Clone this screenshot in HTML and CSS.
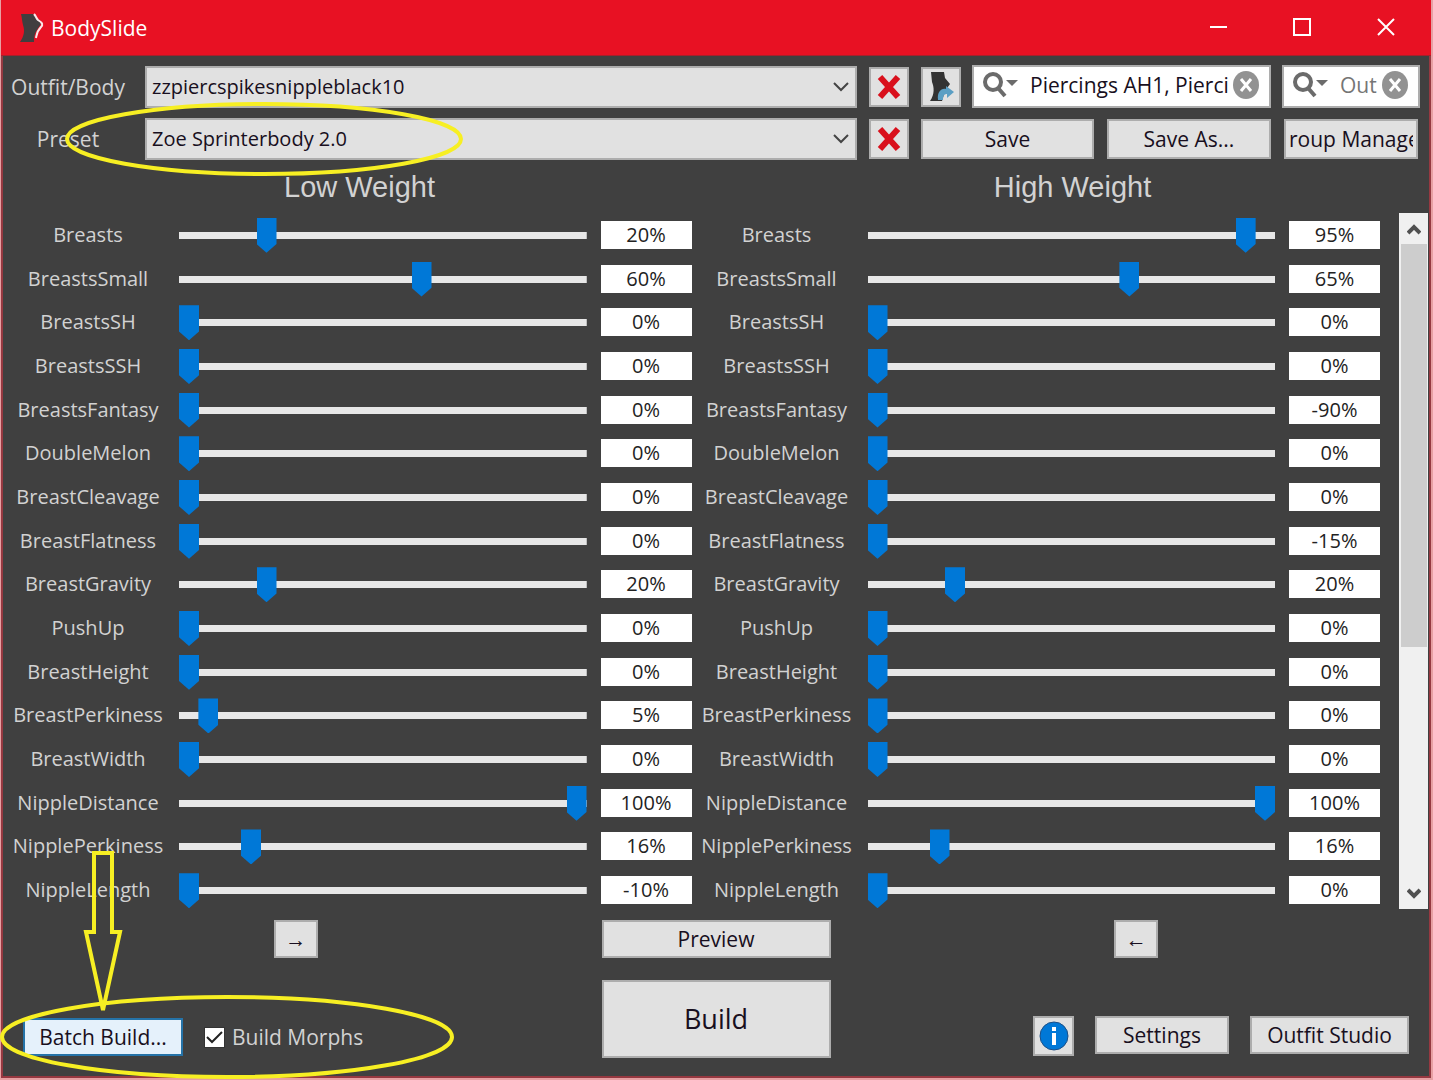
FILE: index.html
```html
<!DOCTYPE html>
<html lang="en">
<head>
<meta charset="utf-8">
<title>BodySlide</title>
<link rel="stylesheet" href="styles.css">
</head>
<body>
<div class="window">
  <header class="titlebar">
    <svg class="app-icon" width="26" height="30" viewBox="0 0 26 30" aria-hidden="true"><path d="M2 1H14L18 5C22 8 23 10 20 14C17 18 15 21 15 29H1C5 23 6 18 4 12C3 8 3 5 2 1Z" fill="#403e3f"/><path d="M15 1C17 3 17 5 19 7C24 10 24 12 22 14C18 18 18 20 17 25" fill="none" stroke="#fbe9ea" stroke-width="2"/></svg>
    <h1 class="app-name">BodySlide</h1>
    <div class="window-buttons">
      <button class="window-button" aria-label="Minimize"><svg width="20" height="20" viewBox="0 0 20 20"><path d="M1 9H18" stroke="#fff" stroke-width="2"/></svg></button>
      <button class="window-button" aria-label="Maximize"><svg width="20" height="20" viewBox="0 0 20 20"><path d="M1 1H17V17H1Z" fill="none" stroke="#fff" stroke-width="2"/></svg></button>
      <button class="window-button" aria-label="Close"><svg width="20" height="20" viewBox="0 0 20 20"><path d="M1 1L17 17M17 1L1 17" stroke="#fff" stroke-width="2"/></svg></button>
    </div>
  </header>

  <main>
    <div class="toolbar">
      <div class="tool-row">
        <label class="tool-label" for="outfit">Outfit/Body</label>
        <select class="combo" id="outfit"><option>zzpiercspikesnippleblack10</option></select>
        <button class="button icon-button" aria-label="Clear outfit"><svg width="26" height="26" viewBox="0 0 26 26"><path d="M4 3L22 23M22 3L4 23" stroke="#d9101c" stroke-width="6"/></svg></button>
        <div class="tool-group">
          <button class="button icon-button" aria-label="Choose body"><svg width="26" height="32" viewBox="0 0 26 32"><path d="M3 1H16L17 7L22 13L17 20L14 30H2C7 23 6 16 4 11Z" fill="#333"/><path d="M10 29C9 21 13 17 18 18V15L26 21L19 27V23C16 23 15 25 15 29Z" fill="#5b9fc4"/></svg></button>
          <div class="search search-wide">
            <svg width="38" height="28" viewBox="0 0 38 28" aria-hidden="true"><circle cx="12" cy="11" r="8" fill="none" stroke="#6b6b6b" stroke-width="4"/><path d="M17 17L24 25" stroke="#6b6b6b" stroke-width="4"/><path d="M25 9H37L31 15Z" fill="#6b6b6b"/></svg>
            <input class="search-input" type="text" aria-label="Group filter" value="Piercings AH1, Pierci">
            <button class="clear" aria-label="Clear group filter"><svg width="26" height="28" viewBox="0 0 26 28"><ellipse cx="13" cy="14" rx="13" ry="14" fill="#929292"/><path d="M8 8L18 20M18 8L8 20" stroke="#fff" stroke-width="3"/></svg></button>
          </div>
          <div class="search search-narrow">
            <svg width="38" height="28" viewBox="0 0 38 28" aria-hidden="true"><circle cx="12" cy="11" r="8" fill="none" stroke="#6b6b6b" stroke-width="4"/><path d="M17 17L24 25" stroke="#6b6b6b" stroke-width="4"/><path d="M25 9H37L31 15Z" fill="#6b6b6b"/></svg>
            <input class="search-input" type="text" aria-label="Outfit filter" placeholder="Out">
            <button class="clear" aria-label="Clear outfit filter"><svg width="26" height="28" viewBox="0 0 26 28"><ellipse cx="13" cy="14" rx="13" ry="14" fill="#929292"/><path d="M8 8L18 20M18 8L8 20" stroke="#fff" stroke-width="3"/></svg></button>
          </div>
        </div>
      </div>
      <div class="tool-row">
        <label class="tool-label" for="preset">Preset</label>
        <select class="combo" id="preset"><option>Zoe Sprinterbody 2.0</option></select>
        <button class="button icon-button" aria-label="Delete preset"><svg width="26" height="26" viewBox="0 0 26 26"><path d="M4 3L22 23M22 3L4 23" stroke="#d9101c" stroke-width="6"/></svg></button>
        <div class="tool-group preset-buttons">
          <button class="button save">Save</button>
          <button class="button save-as">Save As...</button>
          <button class="button manager"><span class="clipped"><span>Group Manager</span></span></button>
        </div>
      </div>
    </div>

    <div class="headings">
      <h2 class="heading">Low Weight</h2>
      <h2 class="heading">High Weight</h2>
    </div>

    <div class="panel">
      <div class="sliders" id="low"></div>
      <div class="sliders" id="high"></div>
      <div class="scrollbar">
        <button class="scroll-button" aria-label="Scroll up"><svg width="14" height="12" viewBox="0 0 14 12"><path d="M1 10L7 4L13 10" fill="none" stroke="#505050" stroke-width="4"/></svg></button>
        <div class="scroll-track"><div class="scroll-thumb"></div></div>
        <button class="scroll-button" aria-label="Scroll down"><svg width="14" height="12" viewBox="0 0 14 12"><path d="M1 2L7 8L13 2" fill="none" stroke="#505050" stroke-width="4"/></svg></button>
      </div>
    </div>

    <footer class="actions">
      <div class="side side-left">
        <button class="button arrow" aria-label="Copy low to high">→</button>
        <div class="batch-row">
          <button class="button batch">Batch Build...</button>
          <input class="tick" type="checkbox" id="morphs" checked>
          <label for="morphs">Build Morphs</label>
        </div>
      </div>
      <div class="center">
        <button class="button">Preview</button>
        <button class="button build">Build</button>
      </div>
      <div class="side side-right">
        <button class="button arrow" aria-label="Copy high to low">←</button>
        <div class="settings-row">
          <button class="button info" aria-label="About"><svg width="30" height="30" viewBox="0 0 30 30"><circle cx="15" cy="15" r="14" fill="#0078d7" stroke="#1d4f86" stroke-width="1"/><path d="M13 6H17V10H13ZM13 12H17V24H13Z" fill="#fff"/></svg></button>
          <button class="button settings">Settings</button>
          <button class="button studio">Outfit Studio</button>
        </div>
      </div>
    </footer>
  </main>

  <svg class="mark mark-preset" width="402" height="78" viewBox="0 0 402 78" aria-hidden="true"><ellipse cx="201" cy="39" rx="197" ry="35"/></svg>
  <svg class="mark mark-batch" width="456" height="230" viewBox="0 0 456 230" aria-hidden="true"><ellipse cx="227" cy="188" rx="225" ry="40"/><path d="M94 4H112V83H120L103 161L86 83H94Z"/></svg>
</div>
<script src="sliders.js"></script>
</body>
</html>
```
FILE: styles.css
```css
* { box-sizing: border-box; }

body {
  margin: 0;
  padding: 0 2px 2px 1px;
  background: #e7a0a3;
  color: #d2d2d2;
  font-family: "Open Sans", "Noto Sans", sans-serif;
  font-size: 21px;
  line-height: 28px;
}

button, input, select { font: inherit; margin: 0; padding: 0; border-radius: 0; }
svg { display: block; flex: none; }

.window {
  position: relative;
  background: #404040;
  border: 2px solid #963941;
  border-top: 0;
}

.titlebar {
  display: flex;
  align-items: center;
  height: 56px;
  margin: 0 -2px;
  padding: 0 2px 0 18px;
  background: #e81123;
  border-bottom: 1px solid #a5202b;
}
.app-name { flex: 1; margin: 0 0 0 6px; color: #fff; font-size: 21px; font-weight: 400; }
.window-buttons { display: flex; }
.window-button {
  display: flex;
  align-items: center;
  justify-content: center;
  width: 84px;
  height: 52px;
  background: none;
  border: 0;
}

.toolbar { display: grid; gap: 10px; padding: 9px 9px 0 0; }
.tool-row {
  display: grid;
  grid-template-columns: 130px minmax(0, 1fr) 40px 499px;
  column-gap: 12px;
  align-items: center;
}
.tool-label { text-align: center; }
.combo {
  width: 100%;
  height: 42px;
  padding: 0 40px 0 5px;
  appearance: none;
  color: #180f20;
  font-size: 20px;
  border: 2px solid #adadad;
  background: #e1e1e1 url("data:image/svg+xml,%3Csvg xmlns='http://www.w3.org/2000/svg' width='16' height='10'%3E%3Cpath d='M1 1L8 8L15 1' fill='none' stroke='%23444' stroke-width='2'/%3E%3C/svg%3E") no-repeat right 6px center;
}
.tool-group { display: flex; gap: 11px; align-items: center; }
.preset-buttons { gap: 13px; padding-right: 2px; }
.button {
  display: flex;
  align-items: center;
  justify-content: center;
  height: 40px;
  color: #180f20;
  background: #e1e1e1;
  border: 2px solid #adadad;
  white-space: nowrap;
}
.icon-button { width: 40px; flex: none; }
.save { width: 173px; }
.save-as { width: 164px; }
.manager { flex: 1; min-width: 0; padding: 0 3px; }
.clipped { display: flex; justify-content: center; width: 100%; overflow: hidden; }

.search {
  display: flex;
  align-items: center;
  height: 43px;
  padding: 0 10px 4px 7px;
  background: #fff;
  border: 2px solid #adadad;
}
.search-wide { width: 299px; }
.search-narrow { flex: 1; min-width: 0; }
.search-input {
  flex: 1;
  min-width: 0;
  height: 36px;
  margin-left: 11px;
  color: #180f20;
  background: none;
  border: 0;
}
.search-input::placeholder { color: #757575; opacity: 1; }
.clear { flex: none; margin-left: 4px; background: none; border: 0; }

.headings { display: grid; grid-template-columns: 1fr 1fr; padding-top: 7px; }
.heading {
  margin: 0;
  text-align: center;
  font: 400 29px/40px "Liberation Sans", Arial, sans-serif;
}

.panel {
  display: grid;
  grid-template-columns: minmax(0, 1fr) minmax(0, 1fr) 48px;
  margin-top: 6px;
  padding-right: 1px;
}
.sliders { display: grid; grid-template-rows: repeat(16, 1fr); height: 699px; }
.slider-row {
  display: grid;
  grid-template-columns: 170px minmax(0, 1fr) 91px;
  align-items: center;
}
.slider-label { text-align: center; font-size: 20px; }
.range {
  appearance: none;
  height: 36px;
  margin: 1px 14px 0 6px;
  background: linear-gradient(#e7e7e7, #e7e7e7) no-repeat center / 100% 7px;
}
.range::-webkit-slider-thumb {
  appearance: none;
  width: 20px;
  height: 35px;
  background: #0078d7;
  clip-path: polygon(0 0, 100% 0, 100% 75%, 50% 100%, 0 75%);
}
.value {
  width: 100%;
  height: 28px;
  text-align: center;
  font-size: 20px;
  color: #222;
  background: #fff;
  border: 0;
}

.scrollbar {
  display: flex;
  flex-direction: column;
  height: 696px;
  margin-left: 19px;
  background: #f0f0f0;
}
.scroll-button {
  display: flex;
  align-items: center;
  justify-content: center;
  height: 31px;
  background: none;
  border: 0;
}
.scroll-track { flex: 1; padding: 0 1px 0 2px; }
.scroll-thumb { height: 403px; background: #cdcdcd; }

.actions {
  display: grid;
  grid-template-columns: minmax(0, 1fr) 229px minmax(0, 1fr);
  padding: 8px 0 18px;
}
.actions .button { height: 38px; }
.side {
  display: flex;
  flex-direction: column;
  justify-content: space-between;
  align-items: center;
  padding-bottom: 2px;
}
.side-left { padding-right: 13px; }
.side-right { padding-left: 13px; }
.arrow { width: 44px; }
.center { display: grid; gap: 22px; }
.actions .build { height: 78px; font-size: 27px; }
.batch-row, .settings-row { display: flex; width: 100%; }
.batch-row { align-items: center; padding-left: 20px; }
.batch { width: 160px; background: #e5f1fb; border-color: #2573a8; }
.tick {
  appearance: none;
  width: 21px;
  height: 21px;
  margin: 0 7px 0 21px;
  border: 1px solid #333;
  background: #fff url("data:image/svg+xml,%3Csvg xmlns='http://www.w3.org/2000/svg' width='19' height='19'%3E%3Cpath d='M2 9L7 14L17 4' fill='none' stroke='%23222' stroke-width='2'/%3E%3C/svg%3E") no-repeat center;
}
.settings-row { justify-content: flex-end; gap: 21px; padding-right: 20px; }
.actions .info { width: 41px; height: 40px; }
.settings { width: 134px; }
.studio { width: 159px; }

/* Hand-drawn highlights over the window */
.mark { position: absolute; fill: none; stroke: #f7ef23; stroke-width: 4; pointer-events: none; }
.mark-preset { left: 60px; top: 100px; }
.mark-batch { left: -3px; bottom: -3px; }
```
FILE: sliders.js
```js
const names = [
  "Breasts", "BreastsSmall", "BreastsSH", "BreastsSSH", "BreastsFantasy", "DoubleMelon",
  "BreastCleavage", "BreastFlatness", "BreastGravity", "PushUp", "BreastHeight",
  "BreastPerkiness", "BreastWidth", "NippleDistance", "NipplePerkiness", "NippleLength"
];
const values = {
  low: [20, 60, 0, 0, 0, 0, 0, 0, 20, 0, 0, 5, 0, 100, 16, -10],
  high: [95, 65, 0, 0, -90, 0, 0, -15, 20, 0, 0, 0, 0, 100, 16, 0]
};
for (const side of ["low", "high"]) {
  document.getElementById(side).innerHTML = names.map((name, i) => {
    const id = side + "-" + name;
    const value = values[side][i];
    return `<div class="slider-row">
      <label class="slider-label" for="${id}">${name}</label>
      <input class="range" type="range" id="${id}" min="0" max="100" value="${value}">
      <input class="value" type="text" aria-label="${name} value" value="${value}%">
    </div>`;
  }).join("");
}
```
